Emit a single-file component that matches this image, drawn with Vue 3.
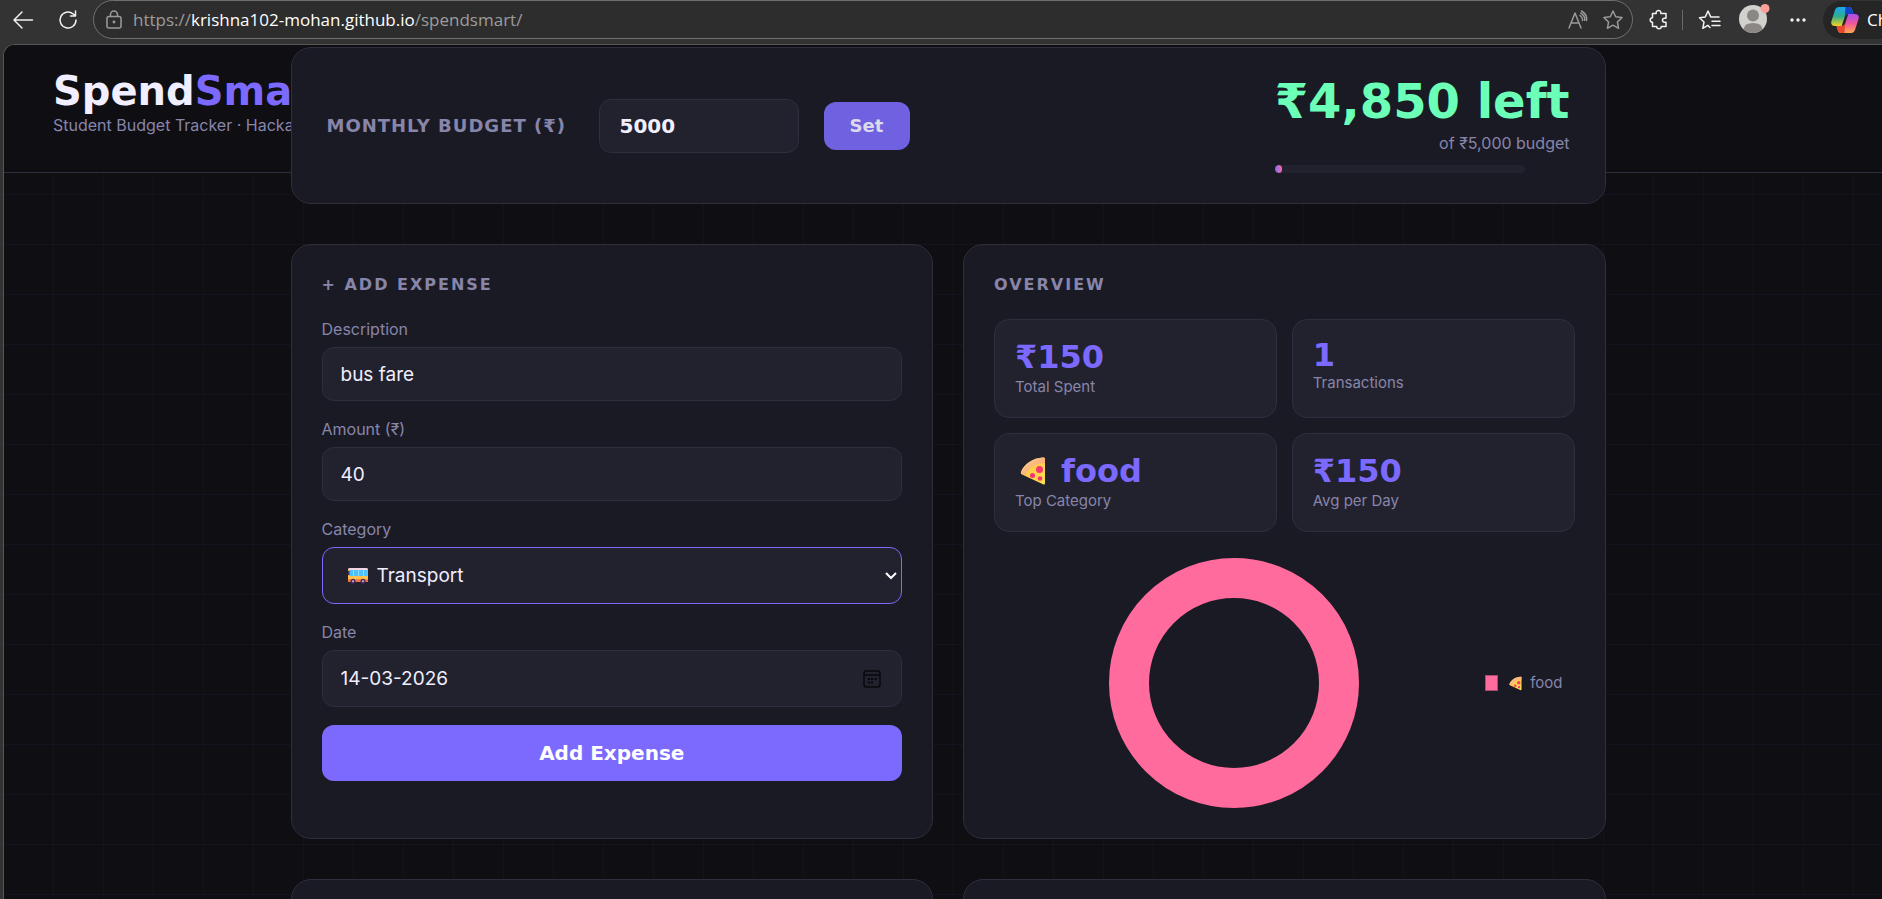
<script setup>
import { ref, computed } from 'vue'

const budget = ref('5000')
const description = ref('bus fare')
const amount = ref('40')
const category = ref('Transport')
const date = ref('14-03-2026')
const categories = ['Transport', 'Food', 'Books', 'Entertainment', 'Other']

const spent = 150
const usedPercent = computed(() => Math.round((spent / Number(budget.value || 1)) * 100) + '%')

const stats = [
  { value: '₹150', label: 'Total Spent', kind: 'rupee' },
  { value: '1', label: 'Transactions', kind: 'count' },
  { value: 'food', label: 'Top Category', kind: 'category' },
  { value: '₹150', label: 'Avg per Day', kind: 'rupee' }
]
</script>

<template>
  <div class="window">
    <svg class="defs" aria-hidden="true">
      <defs>
        <linearGradient id="crust" x1="0" y1="0" x2="1" y2="1">
          <stop offset="0" stop-color="#ffd39a" />
          <stop offset="1" stop-color="#f59a62" />
        </linearGradient>
        <linearGradient id="cheese" x1="0" y1="0" x2="1" y2="1">
          <stop offset="0" stop-color="#ffc24a" />
          <stop offset="1" stop-color="#ffe04d" />
        </linearGradient>
        <symbol id="pizza" viewBox="0 0 26 28">
          <path d="M1 15C4 7 13 1 23 .5c1.500 0 2 .5 2 2V26c0 1.500-1 2-2.500 1L2 17.500c-1-.6-1.400-1.400-1-2.500z" fill="url(#cheese)" />
          <path d="M1 15C4 7 13 1 23 .5c1.500 0 2 .5 2 2V6C16 6 8 11 5 18.500l-3-1.500c-1-.5-1.400-1.200-1-2z" fill="url(#crust)" />
          <circle cx="19.500" cy="12.500" r="3.500" fill="#f5366f" />
          <circle cx="12.500" cy="18.500" r="2.500" fill="#f5366f" />
          <circle cx="20" cy="21.500" r="2.300" fill="#f5366f" />
        </symbol>
      </defs>
    </svg>

    <nav class="toolbar" aria-label="Browser">
      <button class="tool back" aria-label="Back">
        <svg width="22" height="20" viewBox="0 0 22 20"><path d="M10 2 2 10l8 8M2 10h18.500" /></svg>
      </button>
      <button class="tool reload" aria-label="Refresh">
        <svg width="20" height="20" viewBox="0 0 20 20"><path d="M18 10a8 8 0 1 1-3-6.200L17 5.500M17.500 1v5h-5" /></svg>
      </button>
      <div class="address">
        <svg class="lock" width="18" height="20" viewBox="0 0 18 20">
          <rect x="2" y="6.500" width="14" height="11.500" rx="2" />
          <path d="M5.500 6.500V4.500a3.500 3.500 0 0 1 7 0v2" />
          <circle cx="9" cy="12" r=".7" />
        </svg>
        <span class="url">https://<b>krishna102-mohan.github.io</b>/spendsmart/</span>
        <button class="tool dim" aria-label="Read aloud">
          <svg width="21" height="20" viewBox="0 0 21 20"><path d="M1 18 7 3l6 15M3 13h8M12 5.500q3 2 2.500 5M13.500 1q6 3.500 5 9.500M12.800 3.200q4.500 2.800 3.800 7" /></svg>
        </button>
        <button class="tool dim" aria-label="Add to favourites">
          <svg width="22" height="22" viewBox="0 0 22 22"><path d="m11 2 2.700 5.800 6.300.8-4.600 4.400 1.200 6.300L11 16.200l-5.600 3.100L6.600 13 2 8.600l6.300-.8z" /></svg>
        </button>
      </div>
      <button class="tool" aria-label="Extensions">
        <svg width="20" height="22" viewBox="0 0 20 22"><path d="M3.500 4.500h3.700a2.400 2.400 0 1 1 4.600 0h5.200v4.800h-1.500a2 2 0 1 0 0 4H17v4.200h-4.700a2.300 2.300 0 1 1-4.600 0H3.500v-4.200a2.300 2.300 0 1 1 0-4.600z" /></svg>
      </button>
      <span class="rule"></span>
      <button class="tool" aria-label="Favourites">
        <svg width="23" height="22" viewBox="0 0 23 22"><path d="M12 18.500 9.800 16.300 4.800 19.300 6 13 1.500 8.700l5.800-.8L10 2l2.700 5.900H21M14 12.200h8M14 16.500h8" /></svg>
      </button>
      <button class="tool profile" aria-label="Profile">
        <svg width="32" height="32" viewBox="0 0 32 32">
          <circle cx="15" cy="17" r="14" fill="#d3d1ce" />
          <circle cx="15" cy="13.500" r="6" fill="#8b8785" />
          <path d="M5.500 27.300Q6.500 21 15 21t9.500 6.300A14 14 0 0 1 5.500 27.300z" fill="#8b8785" />
          <circle cx="27" cy="6.500" r="4.500" fill="#ffa198" />
        </svg>
      </button>
      <button class="tool more" aria-label="Settings">
        <svg width="18" height="6" viewBox="0 0 18 6"><circle cx="3" cy="3" r="1.700" /><circle cx="9" cy="3" r="1.700" /><circle cx="15" cy="3" r="1.700" /></svg>
      </button>
      <button class="copilot">
        <svg width="28" height="26" viewBox="0 0 28 26" aria-hidden="true">
          <defs>
            <linearGradient id="cpA" x1="0" y1="0" x2="0" y2="1">
              <stop offset="0" stop-color="#1ba5f5" /><stop offset=".5" stop-color="#2fae8e" /><stop offset="1" stop-color="#f5d020" />
            </linearGradient>
            <linearGradient id="cpB" x1="0" y1="0" x2="0" y2="1">
              <stop offset="0" stop-color="#a74df0" /><stop offset=".5" stop-color="#f0569a" /><stop offset="1" stop-color="#ffa94d" />
            </linearGradient>
          </defs>
          <path d="M8 0h10q2.500 0 3.300 3l1.200 4H17c-2 0-2.800 1-3.300 3l-3 9H4c-3 0-4.500-2-3.500-5L4 3Q5 0 8 0z" fill="url(#cpA)" />
          <path d="M14.500 0H18q2.500 0 3.300 3l1.200 4H17c-1.800 0-2.600 .8-3.200 2.500z" fill="#1742c8" />
          <path d="M20 26H10q-2.500 0-3.300-3l-1.200-4H11c2 0 2.800-1 3.300-3l3-9H24c3 0 4.500 2 3.500 5L24 23q-1 3-4 3z" fill="url(#cpB)" />
          <path d="M13.500 26H10q-2.500 0-3.300-3l-1.200-4H11c1.800 0 2.600-.8 3.200-2.500z" fill="#e8492f" />
        </svg>
        <span>Chat</span>
      </button>
    </nav>

    <div class="page">
      <header class="site-header">
        <h1>Spend<span>Smart</span></h1>
        <p>Student Budget Tracker · Hackathon Edition</p>
      </header>

      <main class="container">
        <section class="card budget">
          <form class="budget-form" @submit.prevent>
            <label for="budget">MONTHLY BUDGET (₹)</label>
            <input id="budget" v-model="budget" type="text" inputmode="numeric" />
            <button type="submit">Set</button>
          </form>
          <div class="remaining">
            <strong>₹4,850 left</strong>
            <span>of ₹5,000 budget</span>
            <div class="track"><div class="fill" :style="{ width: usedPercent }"></div></div>
          </div>
        </section>

        <div class="columns">
          <section class="card">
            <h2>+ ADD EXPENSE</h2>
            <form class="expense" @submit.prevent>
              <div class="field">
                <label for="description">Description</label>
                <input id="description" v-model="description" type="text" />
              </div>
              <div class="field">
                <label for="amount">Amount (₹)</label>
                <input id="amount" v-model="amount" type="text" inputmode="decimal" />
              </div>
              <div class="field">
                <label for="category">Category</label>
                <div class="control tall focused">
                  <select id="category" v-model="category">
                    <option v-for="c in categories" :key="c">{{ c }}</option>
                  </select>
                  <svg class="bus" width="20" height="16" viewBox="0 0 20 16" aria-hidden="true">
                    <rect x="0" y="0" width="20" height="14" rx="2" fill="#ffa53a" />
                    <path d="M0 8h20v3H0z" fill="#ffc04d" />
                    <path d="M2 0h16q2 0 2 2H0q0-2 2-2z" fill="#f3d5e8" />
                    <path d="M1 2h18.500v6H1z" fill="#4cc2ff" />
                    <path d="M5.500 2v6M10.500 2v6M15.500 2v6" stroke="#8edcff" />
                    <path d="M0 11.500h20V14H0z" fill="#f0713a" />
                    <path d="M0 3h1.500v4H0z" fill="#463063" />
                    <circle cx="5" cy="13.300" r="2.500" fill="#4a2a5c" /><circle cx="15" cy="13.300" r="2.500" fill="#4a2a5c" />
                    <circle cx="5" cy="13.300" r="1" fill="#cdbddb" /><circle cx="15" cy="13.300" r="1" fill="#cdbddb" />
                  </svg>
                  <svg class="chevron" width="12" height="8" viewBox="0 0 12 8" aria-hidden="true"><path d="m1 1 5 5 5-5" /></svg>
                </div>
              </div>
              <div class="field">
                <label for="date">Date</label>
                <div class="control tall">
                  <input id="date" v-model="date" type="text" />
                  <svg class="calendar" width="18" height="18" viewBox="0 0 18 18" aria-hidden="true">
                    <rect x="1" y="1" width="16" height="16" rx="2.500" /><path d="M1 5h16" />
                    <path d="M5 9h2M8 9h2M11.500 9h2M5 12.500h2M8 12.500h2" stroke-width="2" />
                  </svg>
                </div>
              </div>
              <button class="submit" type="submit">Add Expense</button>
            </form>
          </section>

          <section class="card">
            <h2>OVERVIEW</h2>
            <div class="stats">
              <div v-for="s in stats" :key="s.label" class="stat">
                <div class="value" :class="s.kind">
                  <svg v-if="s.kind === 'category'" class="slice" width="26" height="28"><use href="#pizza" /></svg>{{ s.value }}
                </div>
                <div class="caption">{{ s.label }}</div>
              </div>
            </div>
            <div class="chart">
              <div class="plot">
                <svg width="250" height="250" viewBox="0 0 250 250" role="img" aria-label="food 100%">
                  <circle cx="125" cy="125" r="105" fill="none" stroke="#ff6b9d" stroke-width="40" />
                </svg>
              </div>
              <div class="legend">
                <i></i>
                <svg width="13" height="15"><use href="#pizza" /></svg>
                <span>food</span>
              </div>
            </div>
          </section>

          <section class="card"></section>
          <section class="card"></section>
        </div>
      </main>
    </div>
  </div>
</template>

<style>
html,
body {
  background: #333;
  overflow: hidden;
}
</style>

<style scoped>
* {
  box-sizing: border-box;
}

.window {
  --surface: #1a1a24;
  --raised: #22222e;
  --line: #2e2e3e;
  --accent: #7c6aff;
  --text: #f0eeff;
  --muted: #8885aa;
  --display: "DejaVu Sans", sans-serif;
  --body: Inter, "DejaVu Sans", sans-serif;
  width: calc(100% + 10px);
  height: 100vh;
  display: flex;
  flex-direction: column;
  overflow: hidden;
  font-family: var(--body);
  font-size: 16px;
  color: var(--text);
  background: #333;
}

.defs {
  position: absolute;
  width: 0;
  height: 0;
}

h1,
h2,
p {
  margin: 0;
}

button {
  border: 0;
  margin: 0;
  padding: 0;
  font: inherit;
  color: inherit;
  cursor: pointer;
}

/* Browser toolbar */
.toolbar {
  flex: none;
  display: flex;
  align-items: center;
  height: 44px;
  padding: 0 0 5px 12px;
}

.tool {
  display: flex;
  background: none;
}

.tool svg,
.lock {
  fill: none;
  stroke: #f2f2f2;
  stroke-width: 1.500;
  stroke-linejoin: round;
  stroke-linecap: round;
}

.reload {
  margin: 0 15px 0 24px;
}

.address {
  flex: 1;
  display: flex;
  align-items: center;
  gap: 13px;
  height: 39px;
  padding: 0 8px 0 11px;
  border: 1px solid #707070;
  border-radius: 20px;
  background: #2d2d2d;
  margin-right: 16px;
}

.lock,
.tool.dim svg {
  stroke: #9a9a9a;
}

.url {
  flex: 1;
  margin-left: -3px;
  font: 17px/24px "Open Sans", sans-serif;
  color: #9c9c9c;
  white-space: nowrap;
}

.url b {
  font-weight: 400;
  color: #fff;
}

.rule {
  width: 1px;
  height: 20px;
  margin: 0 15px 0 13px;
  background: #6a6a6a;
}

.profile {
  margin: -3px 0 0 17px;
}

.profile svg {
  stroke: none;
}

.more {
  margin: 0 16px 0 19px;
}

.more svg {
  fill: #f2f2f2;
  stroke: none;
}

.copilot {
  display: flex;
  align-items: center;
  gap: 8px;
  width: 69px;
  height: 38px;
  padding-left: 8px;
  border-radius: 19px 0 0 19px;
  overflow: hidden;
  background: #252525;
  font: 17px/24px "Open Sans", sans-serif;
  color: #fff;
}

.copilot svg {
  flex: none;
}

/* Page */
.page {
  flex: 1;
  min-height: 0;
  display: grid;
  grid-template-rows: 128px 1fr;
  margin-left: 3px;
  border: 2px solid #565656;
  border-width: 1px 0 0 1px;
  border-radius: 12px 0 0 0;
  overflow: hidden;
  background-color: #0e0e13;
  background-image:
    linear-gradient(#7c6aff0d 1px, transparent 1px),
    linear-gradient(90deg, #7c6aff0d 1px, transparent 1px);
  background-size: 50px 50px;
  background-position: -1px -1px;
}

.site-header {
  grid-area: 1 / 1;
  padding: 30px 49px 0;
  border-bottom: 1px solid var(--line);
  background: #0e0e13;
  white-space: nowrap;
}

h1 {
  margin-bottom: 6px;
  font: 700 40px/32px var(--display);
}

h1 span {
  color: var(--accent);
}

.site-header p {
  line-height: 24px;
  color: var(--muted);
}

.container {
  grid-area: 1 / 1 / 3 / 2;
  z-index: 1;
  width: 100%;
  max-width: 1375px;
  margin: 0 auto;
  padding: 2px 30px 0;
}

.card {
  min-width: 0;
  min-height: 160px;
  padding: 30px;
  border: 1px solid var(--line);
  border-radius: 20px;
  background: var(--surface);
}

.budget {
  display: flex;
  align-items: center;
  justify-content: space-between;
  min-height: 157px;
  padding: 24px 35px;
  margin-bottom: 40px;
}

.budget-form {
  display: flex;
  align-items: center;
  gap: 25px;
}

.budget-form label {
  min-width: 247px;
  font: 700 18px/24px var(--display);
  letter-spacing: 1px;
  color: var(--muted);
}

input,
select {
  display: block;
  width: 100%;
  height: 54px;
  padding: 0 18px;
  border: 1px solid var(--line);
  border-radius: 12px;
  outline: 0;
  background: var(--raised);
  color: var(--text);
  font: 19px/24px var(--body);
}

.budget-form input {
  width: 200px;
  padding: 0 20px;
  font: 700 20px/24px var(--display);
}

.budget-form button {
  width: 86px;
  height: 48px;
  border-radius: 12px;
  background: #7061e1;
  color: #dcdaea;
  font: 700 18px/24px var(--display);
}

.remaining {
  display: flex;
  flex-direction: column;
  align-items: flex-end;
}

.remaining strong {
  font: 700 48px/44px var(--display);
  color: #6bffb8;
}

.remaining span {
  margin: 8px 0 10px;
  line-height: 24px;
  color: var(--muted);
}

.track {
  align-self: flex-start;
  width: 250px;
  height: 8px;
  border-radius: 4px;
  overflow: hidden;
  background: var(--raised);
}

.fill {
  height: 100%;
  border-radius: 4px;
  background: linear-gradient(90deg, #7c6aff, #ff6b9d);
}

.columns {
  display: grid;
  grid-template-columns: 1fr 1fr;
  gap: 40px 30px;
}

h2 {
  margin-bottom: 24px;
  font: 700 16px/20px var(--display);
  letter-spacing: 2px;
  color: var(--muted);
}

.expense {
  display: grid;
  gap: 18px;
}

.field {
  display: grid;
  gap: 8px;
}

.field label {
  line-height: 20px;
  color: var(--muted);
}

.control {
  position: relative;
}

.tall input,
.tall select {
  height: 57px;
}

select {
  appearance: none;
  padding-left: 54px;
}

.focused select {
  border-color: var(--accent);
}

.control svg {
  position: absolute;
  top: 50%;
  transform: translateY(-50%);
  fill: none;
  pointer-events: none;
}

.control .bus {
  left: 26px;
}

.control .chevron {
  right: 5px;
  stroke: #fff;
  stroke-width: 2;
}

.control .calendar {
  right: 21px;
  stroke: #08080c;
  stroke-width: 1.500;
}

.submit {
  height: 56px;
  border-radius: 12px;
  background: var(--accent);
  color: #fff;
  font: 700 20px/24px var(--display);
}

.stats {
  display: grid;
  grid-template-columns: 1fr 1fr;
  gap: 15px;
  margin-bottom: 26px;
}

.stat {
  min-height: 99px;
  padding: 18px 20px;
  border: 1px solid var(--line);
  border-radius: 15px;
  background: var(--raised);
}

.value {
  display: flex;
  align-items: center;
  gap: 15px;
  font: 700 32px/38px var(--display);
  color: var(--accent);
}

.value.count {
  line-height: 34px;
}

.slice {
  margin-left: 5px;
}

.caption {
  font-size: 15px;
  line-height: 22px;
  color: var(--muted);
}

.chart {
  display: flex;
  align-items: center;
}

.plot {
  flex: 1;
  display: flex;
  justify-content: center;
}

.plot svg {
  display: block;
}

.legend {
  display: flex;
  align-items: center;
  padding: 0 12px;
  font-size: 15px;
  line-height: 20px;
  color: var(--muted);
}

.legend i {
  width: 13px;
  height: 16px;
  margin-right: 11px;
  border: 1px solid #a84c72;
  background: #ff6b9d;
}

.legend svg {
  margin-right: 8px;
}
</style>
